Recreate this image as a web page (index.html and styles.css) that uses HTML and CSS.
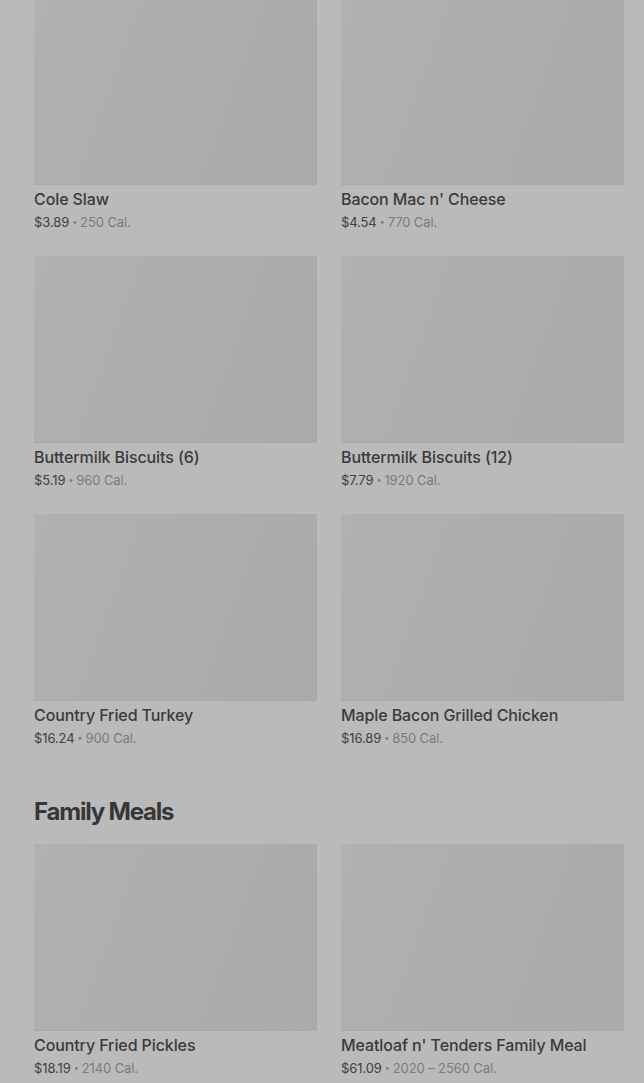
FILE: index.html
```html
<!DOCTYPE html>
<html>
<head>
<meta charset="utf-8">
<link rel="stylesheet" href="styles.css">
</head>
<body>
<main class="page">
  <section class="grid grid-top">
    <div class="card">
      <div class="thumb"></div>
      <div class="name">Cole Slaw</div>
      <div class="meta"><span class="price">$3.89</span><span class="dot">•</span><span class="cal">250 Cal.</span></div>
    </div>
    <div class="card">
      <div class="thumb"></div>
      <div class="name">Bacon Mac n' Cheese</div>
      <div class="meta"><span class="price">$4.54</span><span class="dot">•</span><span class="cal">770 Cal.</span></div>
    </div>
    <div class="card">
      <div class="thumb"></div>
      <div class="name">Buttermilk Biscuits (6)</div>
      <div class="meta"><span class="price">$5.19</span><span class="dot">•</span><span class="cal">960 Cal.</span></div>
    </div>
    <div class="card">
      <div class="thumb"></div>
      <div class="name">Buttermilk Biscuits (12)</div>
      <div class="meta"><span class="price">$7.79</span><span class="dot">•</span><span class="cal">1920 Cal.</span></div>
    </div>
    <div class="card">
      <div class="thumb"></div>
      <div class="name">Country Fried Turkey</div>
      <div class="meta"><span class="price">$16.24</span><span class="dot">•</span><span class="cal">900 Cal.</span></div>
    </div>
    <div class="card">
      <div class="thumb"></div>
      <div class="name">Maple Bacon Grilled Chicken</div>
      <div class="meta"><span class="price">$16.89</span><span class="dot">•</span><span class="cal">850 Cal.</span></div>
    </div>
  </section>

  <h2 class="section-title">Family Meals</h2>

  <section class="grid">
    <div class="card">
      <div class="thumb"></div>
      <div class="name">Country Fried Pickles</div>
      <div class="meta"><span class="price">$18.19</span><span class="dot">•</span><span class="cal">2140 Cal.</span></div>
    </div>
    <div class="card">
      <div class="thumb"></div>
      <div class="name">Meatloaf n' Tenders Family Meal</div>
      <div class="meta"><span class="price">$61.09</span><span class="dot">•</span><span class="cal">2020 – 2560 Cal.</span></div>
    </div>
  </section>
</main>
</body>
</html>
```

FILE: styles.css
```css
html, body {
  margin: 0;
  padding: 0;
  background: #bababa;
  overflow: hidden;
}

body {
  font-family: Inter, "Noto Sans", "Liberation Sans", sans-serif;
  color: #383838;
}

.page {
  padding: 0 20px 0 34px;
}

.grid {
  display: grid;
  grid-template-columns: 283px 283px;
  column-gap: 24px;
  row-gap: 24px;
}

.grid-top {
  margin-top: -2px;
}

.card {
  display: flex;
  flex-direction: column;
}

.thumb {
  height: 187px;
  background: linear-gradient(110deg, #b1b1b1 0%, #adadad 45%, #aaaaaa 100%);
  border-bottom: 1px solid #a9a9a9;
  box-sizing: border-box;
}

.name {
  margin-top: 4px;
  font-size: 16px;
  line-height: 20px;
  font-weight: 500;
  color: #3a3a3a;
  letter-spacing: -0.1px;
}

.meta {
  margin-top: 3px;
  font-size: 13px;
  line-height: 20px;
  display: flex;
  align-items: center;
  letter-spacing: -0.1px;
}

.price {
  color: #404040;
}

.dot {
  color: #7a7a7a;
  font-size: 9px;
  margin: 0 3px 0 3px;
}

.cal {
  color: #7a7a7a;
}

.section-title {
  margin: 0;
  padding: 49px 0 17px;
  font-size: 24px;
  line-height: 30px;
  font-weight: 700;
  letter-spacing: -1.2px;
  color: #363636;
}
```
